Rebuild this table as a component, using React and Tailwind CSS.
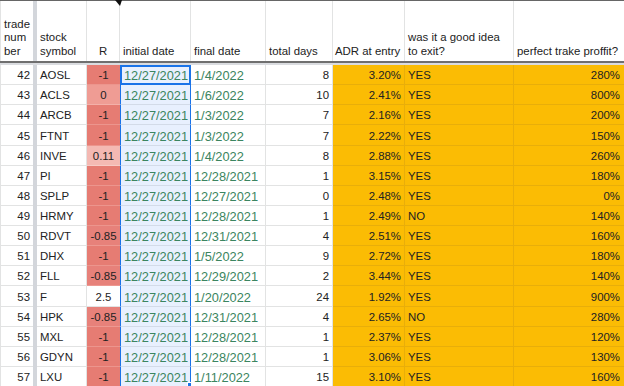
const rows = [
  [42, "AOSL", "-1", "1/4/2022", 8, "3.20%", "YES", "280%"],
  [43, "ACLS", "0", "1/6/2022", 10, "2.41%", "YES", "800%"],
  [44, "ARCB", "-1", "1/3/2022", 7, "2.16%", "YES", "200%"],
  [45, "FTNT", "-1", "1/3/2022", 7, "2.22%", "YES", "150%"],
  [46, "INVE", "0.11", "1/4/2022", 8, "2.88%", "YES", "260%"],
  [47, "PI", "-1", "12/28/2021", 1, "3.15%", "YES", "180%"],
  [48, "SPLP", "-1", "12/27/2021", 0, "2.48%", "YES", "0%"],
  [49, "HRMY", "-1", "12/28/2021", 1, "2.49%", "NO", "140%"],
  [50, "RDVT", "-0.85", "12/31/2021", 4, "2.51%", "YES", "160%"],
  [51, "DHX", "-1", "1/5/2022", 9, "2.72%", "YES", "180%"],
  [52, "FLL", "-0.85", "12/29/2021", 2, "3.44%", "YES", "140%"],
  [53, "F", "2.5", "1/20/2022", 24, "1.92%", "YES", "900%"],
  [54, "HPK", "-0.85", "12/31/2021", 4, "2.65%", "NO", "280%"],
  [55, "MXL", "-1", "12/28/2021", 1, "2.37%", "YES", "120%"],
  [56, "GDYN", "-1", "12/28/2021", 1, "3.06%", "YES", "130%"],
  [57, "LXU", "-1", "1/11/2022", 15, "3.10%", "YES", "160%"],
];

const rFill = {
  "-1": "bg-[#e67c73] border-[#ec958d]",
  "-0.85": "bg-[#e7817a] border-[#ed9891]",
  "0": "bg-[#ef9c94] border-[#f3b0a9]",
  "0.11": "bg-[#f4b9b3] border-[#f7cbc6]",
  "2.5": "bg-white border-[#e2e3e3]",
};

const cell = "box-border shrink-0 h-full flex items-end pb-[2px] px-[3px] border-b";

function Row({ r, first }) {
  const [n, sym, R, end, days, adr, ok, pft] = r;
  return (
    <div className="flex h-[20.14px] text-[11.4px] leading-[13px] text-[#222]">
      <div className={`${cell} w-[33px] justify-end border-l border-[#e2e3e3]`}>{n}</div>
      <div className="shrink-0 w-[4px] h-full bg-[#d3d6db]" />
      <div className={`${cell} w-[50px] border-r border-[#e2e3e3]`}>{sym}</div>
      <div className={`${cell} w-[33px] justify-center ${rFill[R]}`}>{R}</div>
      {first ? (
        <div className="box-border shrink-0 h-full w-[71px] flex items-end pb-[1px] px-[2px] border-2 border-[#1a73e8] bg-[#e8f0fe] text-[12.8px] text-[#3b8560]">
          12/27/2021
        </div>
      ) : (
        <div className={`${cell} w-[71px] border-x border-x-[#1a73e8] border-b-[#d3dbe8] bg-[#e8f0fe] text-[12.8px] text-[#3b8560]`}>
          12/27/2021
        </div>
      )}
      <div className={`${cell} w-[75px] border-r border-[#e2e3e3] text-[12.8px] text-[#3b8560]`}>{end}</div>
      <div className={`${cell} w-[67px] justify-end border-r border-[#e2e3e3]`}>{days}</div>
      <div className={`${cell} w-[72px] justify-end border-r bg-[#fbbc04] border-[#e8ae0a]`}>{adr}</div>
      <div className={`${cell} w-[109px] border-r bg-[#fbbc04] border-[#e8ae0a]`}>{ok}</div>
      <div className={`${cell} w-[120px] justify-end pr-[14px] bg-[#fbbc04] border-[#e8ae0a]`}>{pft}</div>
    </div>
  );
}

const head = "box-border shrink-0 h-full flex items-end pb-[3px] px-[3px] border-r border-[#e2e3e3]";

export default function App() {
  return (
    <div className="relative w-[624px] h-[386px] overflow-hidden bg-white font-['Liberation_Sans',Arial,sans-serif]">
      <div className="flex h-[61px] border-t border-[#666] text-[11.4px] leading-[13.5px] text-[#222]">
        <div className={`${head} w-[33px] border-l border-r-0`}>
          trade<br />num<br />ber
        </div>
        <div className="shrink-0 w-[4px] h-full bg-[#d3d6db]" />
        <div className={`${head} w-[50px]`}>
          stock<br />symbol
        </div>
        <div className={`${head} w-[33px] justify-center`}>R</div>
        <div className={`${head} w-[71px]`}>initial date</div>
        <div className={`${head} w-[75px]`}>final date</div>
        <div className={`${head} w-[67px]`}>total days</div>
        <div className={`${head} w-[72px] pl-[2px] pr-0 whitespace-nowrap`}>ADR at entry</div>
        <div className={`${head} w-[109px]`}>
          was it a good idea<br />to exit?
        </div>
        <div className={`${head} w-[120px] border-r-0`}>perfect trake proffit?</div>
      </div>
      <div className="h-[2px] bg-[#6f6f6f]" />
      <div className="h-[2px] bg-[#dadce0]" />
      {rows.map((r, i) => (
        <Row key={r[0]} r={r} first={i === 0} />
      ))}
      <svg className="absolute left-[115px] top-0" width="7" height="7" viewBox="0 0 7 7">
        <polygon points="0,0 7,0 5,6" fill="#111" />
      </svg>
      <div className="absolute left-[187px] top-[382px] w-[5px] h-[5px] bg-[#1a73e8] border border-white" />
    </div>
  );
}
